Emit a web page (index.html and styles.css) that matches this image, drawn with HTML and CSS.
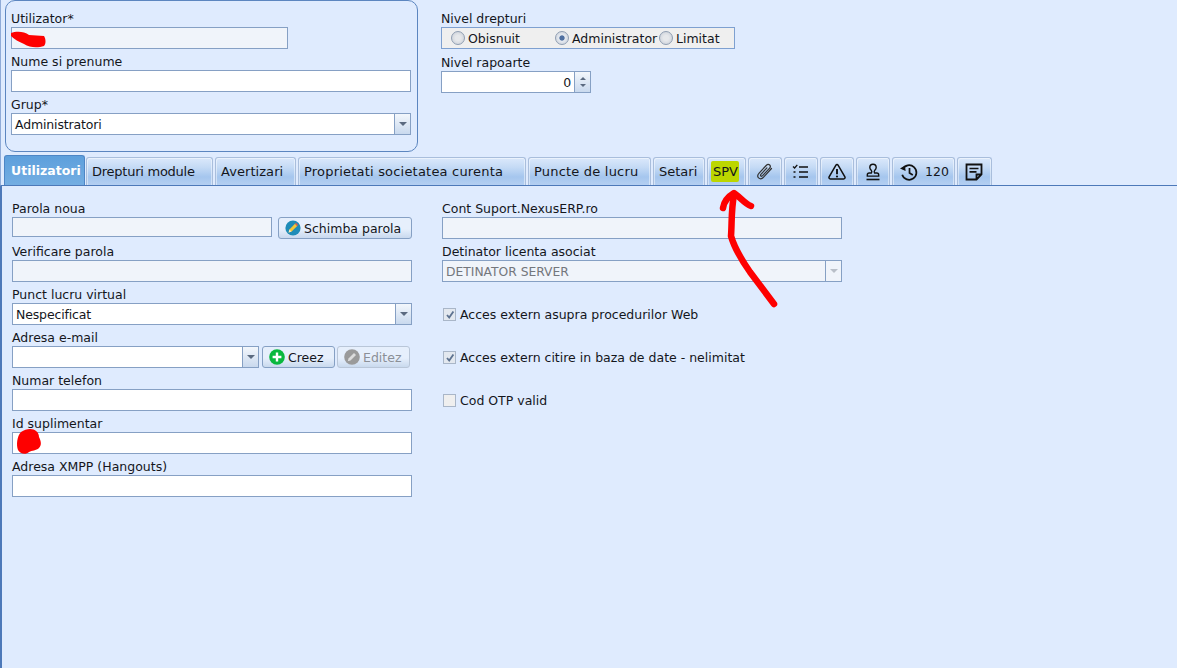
FILE: index.html
```html
<!DOCTYPE html>
<html lang="ro">
<head>
<meta charset="utf-8">
<title>Utilizatori</title>
<link rel="stylesheet" href="styles.css">
</head>
<body>
<div class="app">
  <div class="header">
    <section class="group">
      <div class="field">
        <label>Utilizator*</label>
        <div class="input readonly short"></div>
      </div>
      <div class="field">
        <label>Nume si prenume</label>
        <div class="input"></div>
      </div>
      <div class="field">
        <label>Grup*</label>
        <div class="input combo"><span class="value">Administratori</span><span class="drop"><i></i></span></div>
      </div>
    </section>
    <section class="rights">
      <div class="field">
        <label>Nivel drepturi</label>
        <div class="radios">
          <span class="radio r1"><i></i>Obisnuit</span>
          <span class="radio r2 on"><i></i>Administrator</span>
          <span class="radio r3"><i></i>Limitat</span>
        </div>
      </div>
      <div class="field next">
        <label>Nivel rapoarte</label>
        <div class="input spinner"><span class="value">0</span><span class="spin"><i class="up"></i><i class="down"></i></span></div>
      </div>
    </section>
  </div>

  <nav class="tabs">
    <a class="tab active">Utilizatori</a>
    <a class="tab w-drepturi">Drepturi module</a>
    <a class="tab w-avert">Avertizari</a>
    <a class="tab w-prop">Proprietati societatea curenta</a>
    <a class="tab w-puncte">Puncte de lucru</a>
    <a class="tab w-setari">Setari</a>
    <a class="tab w-spv"><span class="mark">SPV</span></a>
    <a class="tab icon">
      <svg viewBox="0 0 20 20" width="20" height="20"><path d="M16.5 6.5 8.6 15.2c-1.6 1.7-3.8 1.8-5 .7-1.2-1.2-1-3.2.5-4.8l7.1-7.6c1.1-1.2 2.6-1.3 3.5-.5.9.9.8 2.2-.3 3.4l-6.8 7.3c-.6.6-1.3.7-1.8.3-.4-.5-.3-1.2.3-1.8l5.8-6.3" fill="none" stroke="#333" stroke-width="1.2" stroke-linecap="round"/></svg>
    </a>
    <a class="tab icon">
      <svg viewBox="0 0 20 20" width="20" height="20"><path d="M8 5h9M8 10h9M8 15h9M2.5 10h2M2.5 15h2" fill="none" stroke="#111" stroke-width="1.6"/><path d="M2 4.5 3.6 6 6.3 2.8" fill="none" stroke="#111" stroke-width="1.3"/></svg>
    </a>
    <a class="tab icon">
      <svg viewBox="0 0 20 20" width="20" height="20"><path d="M10 2.5c.5 0 .9.3 1.2.8l6.7 11.6c.5.9-.1 2-1.2 2H3.3c-1.1 0-1.7-1.1-1.2-2L8.8 3.3c.3-.5.7-.8 1.2-.8Z" fill="none" stroke="#111" stroke-width="1.5"/><path d="M10 7v5.2" stroke="#111" stroke-width="1.9"/><circle cx="10" cy="14.5" r="1.1" fill="#111"/></svg>
    </a>
    <a class="tab icon">
      <svg viewBox="0 0 20 20" width="20" height="20"><path d="M8.4 8.6C7.6 7.8 6.8 6.8 6.8 5.4a3.2 3.2 0 1 1 6.4 0c0 1.4-.8 2.4-1.6 3.2-.5.6-.5 1.6 0 2.4h2.2c1.1 0 1.9.8 1.9 1.9v1.2H4.3v-1.2C4.3 11.8 5.1 11 6.2 11h2.2c.5-.8.5-1.8 0-2.4Z" fill="none" stroke="#111" stroke-width="1.4"/><path d="M3.5 17.5h13" stroke="#111" stroke-width="1.6"/></svg>
    </a>
    <a class="tab history">
      <svg viewBox="0 0 20 20" width="20" height="20"><path d="M3.6 7.2A7.3 7.3 0 1 1 3.2 12.8" fill="none" stroke="#111" stroke-width="1.7"/><path d="M1 6.5 6.6 9 6 3.5Z" fill="#111"/><path d="M10.5 6v5l3.3 2" fill="none" stroke="#111" stroke-width="1.7"/></svg>
      <span>120</span>
    </a>
    <a class="tab icon last">
      <svg viewBox="0 0 20 20" width="20" height="20"><path d="M12.5 17.5H2.5v-15h15v10Zm0 0v-5h5" fill="none" stroke="#111" stroke-width="1.8"/><path d="M5.5 6.5h9M5.5 9.8h7" stroke="#111" stroke-width="1.7"/></svg>
    </a>
  </nav>

  <main class="page">
    <div class="column">
      <div class="field">
        <label>Parola noua</label>
        <div class="line">
          <div class="input readonly pass"></div>
          <button class="btn wide"><svg class="ico" viewBox="0 0 16 16" width="16" height="16"><circle cx="8" cy="8" r="7.6" fill="#1e8cb8"/><path d="M3.6 12.4 4.4 9.4 10 3.8 12.2 6 6.6 11.6Z" fill="#f4c534"/><path d="M10 3.8 11 2.8 13.2 5 12.2 6Z" fill="#e2574c"/><path d="M3.6 12.4 4.4 9.4 6.6 11.6Z" fill="#fbe6b8"/></svg>Schimba parola</button>
        </div>
      </div>
      <div class="field">
        <label>Verificare parola</label>
        <div class="input readonly"></div>
      </div>
      <div class="field">
        <label>Punct lucru virtual</label>
        <div class="input combo"><span class="value">Nespecificat</span><span class="drop"><i></i></span></div>
      </div>
      <div class="field">
        <label>Adresa e-mail</label>
        <div class="line tight">
          <div class="input combo email"><span class="drop"><i></i></span></div>
          <button class="btn small"><svg class="ico" viewBox="0 0 16 16" width="16" height="16"><circle cx="8" cy="8" r="7.8" fill="#09b83e"/><path d="M8 3.6v8.8M3.6 8h8.8" stroke="#fff" stroke-width="2.4"/></svg>Creez</button>
          <button class="btn small off"><svg class="ico" viewBox="0 0 16 16" width="16" height="16"><circle cx="8" cy="8" r="7.8" fill="#9a9a9a"/><path d="M3.8 12.2 4.5 9.5 10 4l2 2-5.5 5.5Z" fill="#dcdcdc"/></svg>Editez</button>
        </div>
      </div>
      <div class="field">
        <label>Numar telefon</label>
        <div class="input"></div>
      </div>
      <div class="field">
        <label>Id suplimentar</label>
        <div class="input"></div>
      </div>
      <div class="field">
        <label>Adresa XMPP (Hangouts)</label>
        <div class="input"></div>
      </div>
    </div>

    <div class="column">
      <div class="field">
        <label>Cont Suport.NexusERP.ro</label>
        <div class="input readonly"></div>
      </div>
      <div class="field">
        <label>Detinator licenta asociat</label>
        <div class="input combo readonly"><span class="value muted">DETINATOR SERVER</span><span class="drop flat"><i></i></span></div>
      </div>
      <div class="check"><i class="box"><svg viewBox="0 0 12 12" width="12" height="12"><path d="M3 6l2.2 2.6L9.4 2.4" fill="none" stroke="#5d7290" stroke-width="1.8"/></svg></i>Acces extern asupra procedurilor Web</div>
      <div class="check"><i class="box"><svg viewBox="0 0 12 12" width="12" height="12"><path d="M3 6l2.2 2.6L9.4 2.4" fill="none" stroke="#5d7290" stroke-width="1.8"/></svg></i>Acces extern citire in baza de date - nelimitat</div>
      <div class="check"><i class="box blank"></i>Cod OTP valid</div>
    </div>
  </main>

  <svg class="scribbles" viewBox="0 0 1177 668" width="1177" height="668">
    <path d="M11 33 C16 31 24 31 29 35 L44 36 C46 39 46 44 44 46 C38 48 30 48 24 44 C19 42 14 39 11 36Z" fill="#fe0000"/>
    <path d="M30 429 C35 429 39 432 39 437 C41 441 42 445 39 448 C36 451 32 450 29 452 C26 455 20 454 18 450 C16 445 17 436 21 432 C24 430 27 429 30 429Z" fill="#fe0000"/>
    <path d="M723 208 C724 201 729 196 734 193 C739 196 745 204 751 206" fill="none" stroke="#fe0000" stroke-width="6.5" stroke-linecap="round" stroke-linejoin="round"/>
    <path d="M734 195 C731 210 732 224 731 236 C735 250 743 262 750 272 L774 304" fill="none" stroke="#fe0000" stroke-width="6.5" stroke-linecap="round" stroke-linejoin="round"/>
  </svg>
</div>
</body>
</html>
```
FILE: styles.css
```css
* { box-sizing: border-box; }
html, body { margin: 0; height: 100%; }
body {
  font-family: "DejaVu Sans", Verdana, sans-serif;
  font-size: 12.5px;
  color: #14161c;
  background: #dfebfe;
  overflow: hidden;
}
.app {
  position: relative;
  display: flex;
  flex-direction: column;
  width: 1177px;
  height: 668px;
}
.header {
  display: flex;
  flex: none;
  height: 155px;
  padding: 0 0 0 4px;
  border-left: 1px solid #8fabd8;
}
.group {
  width: 413px;
  height: 152px;
  border: 1px solid #5c86c0;
  border-radius: 10px;
  padding: 9px 6px 0 5px;
}
.rights { width: 294px; margin-left: 23px; padding-top: 10px; }
.field { height: 43px; display: flex; flex-direction: column; }
.next { margin-top: 1px; }
label { display: block; height: 17px; line-height: 18px; white-space: nowrap; }
.input {
  height: 22px;
  background: #fff;
  border: 1px solid #86a0c4;
  display: flex;
  align-items: center;
  flex: none;
}
.input.readonly { background: #f0f4fa; }
.input.short { width: 277px; }
.value { flex: 1; padding: 2px 0 0 3px; line-height: 18px; letter-spacing: -0.15px; }
.muted { color: #74777d; font-size: 12.3px; letter-spacing: 0; }
.drop {
  width: 16px;
  height: 20px;
  border-left: 1px solid #86a0c4;
  background: linear-gradient(#f3f7fc, #c9d9ee);
  display: flex;
  align-items: center;
  justify-content: center;
}
.drop.flat { background: #f0f4fa; }
.drop.flat i { border-top-color: #b9bfc8; }
.drop i {
  width: 0;
  height: 0;
  border: 4px solid transparent;
  border-top: 4px solid #5b6a80;
  border-bottom: 0;
}
.radios {
  height: 22px;
  background: #efefef;
  border: 1px solid #7ea0d0;
  display: flex;
  align-items: center;
}
.radio { display: flex; align-items: center; gap: 3px; }
.radio i {
  width: 14px;
  height: 14px;
  border-radius: 50%;
  border: 1px solid #8f9eb2;
  background: radial-gradient(#e6e8eb 30%, #c6ccd6);
}
.radio.on i { background: radial-gradient(#4f6fa0 0 26%, #e6eaf0 36%, #c6ccd6); }
.r1 { margin-left: 9px; width: 104px; }
.r2 { width: 104px; }
.spinner { width: 150px; }
.spinner .value { text-align: right; padding: 1px 3px 0 0; }
.spin {
  width: 16px;
  height: 20px;
  border-left: 1px solid #86a0c4;
  background: linear-gradient(#f3f7fc, #c9d9ee);
  display: flex;
  flex-direction: column;
  align-items: center;
  justify-content: center;
  gap: 4px;
}
.spin i { width: 0; height: 0; border: 3px solid transparent; }
.spin .up { border-top: 0; border-bottom: 3px solid #5b6a80; }
.spin .down { border-bottom: 0; border-top: 3px solid #5b6a80; }

.tabs {
  display: flex;
  flex: none;
  align-items: flex-end;
  gap: 2px;
  height: 31px;
  padding-left: 3px;
  border-left: 1px solid #8fabd8;
  border-bottom: 1px solid #4d79b9;
}
.tab {
  height: 28px;
  border: 1px solid #a9bedc;
  border-bottom: 0;
  border-radius: 3px 3px 0 0;
  box-shadow: inset 1px 1px 0 rgba(255, 255, 255, .45), inset -1px 0 0 rgba(255, 255, 255, .45);
  background: linear-gradient(#dbe8fb 0, #c4daf5 35%, #a5c6ee 70%, #b4cff2 100%);
  display: flex;
  align-items: center;
  gap: 6px;
  padding-left: 5px;
  font-size: 13px;
  white-space: nowrap;
  flex: none;
}
.active {
  width: 81px;
  height: 30px;
  margin-right: -1px;
  padding-left: 6px;
  background: linear-gradient(#5d9fdc, #74aee2);
  border: 1px solid #4d86c6;
  border-bottom: 0;
  box-shadow: none;
  color: #fff;
  font-size: 12.5px;
  font-weight: bold;
}
.w-drepturi { width: 127px; letter-spacing: -0.25px; }
.w-avert { width: 81px; letter-spacing: 0.06px; }
.w-prop { width: 228px; letter-spacing: 0.2px; }
.w-puncte { width: 123px; letter-spacing: 0.2px; }
.w-setari { width: 52px; }
.w-spv { width: 39px; padding-left: 3px; }
.icon { width: 34px; padding-left: 6px; }
.last { width: 35px; }
.history { width: 63px; padding-left: 6px; font-size: 12.5px; }
.mark {
  background: #bcd600;
  border-radius: 2px;
  padding: 3px 1px 3px 2px;
}

.page {
  flex: 1;
  display: flex;
  gap: 30px;
  padding: 14px 0 0 10px;
  border-left: 2px solid #4d79b9;
}
.column { width: 400px; }
.line { display: flex; gap: 6px; }
.line.tight { gap: 3px; }
.pass { width: 260px; height: 20px; }
.email { width: 247px; justify-content: flex-end; }
.btn {
  height: 22px;
  padding: 0 0 0 6px;
  font: inherit;
  color: inherit;
  border: 1px solid #86a0c4;
  border-radius: 3px;
  background: linear-gradient(#e6effc 0, #e6effc 55%, #c9d9ee 100%);
  display: flex;
  align-items: center;
  gap: 3px;
}
.btn.wide { width: 134px; }
.btn.small { width: 73px; }
.btn.off { margin-left: -1px; color: #8b9097; border-color: #b9c6d8; }
.check { height: 43px; display: flex; align-items: center; gap: 4px; }
.column .field + .check { margin-top: 7px; }
.box {
  width: 13px;
  height: 13px;
  margin-left: 1px;
  border: 1px solid #a9b6c8;
  background: #e3e8ef;
  display: flex;
}
.box svg { margin: -0.5px; }
.box.blank { background: #efefef; }
.scribbles { position: absolute; left: 0; top: 0; pointer-events: none; }
```
